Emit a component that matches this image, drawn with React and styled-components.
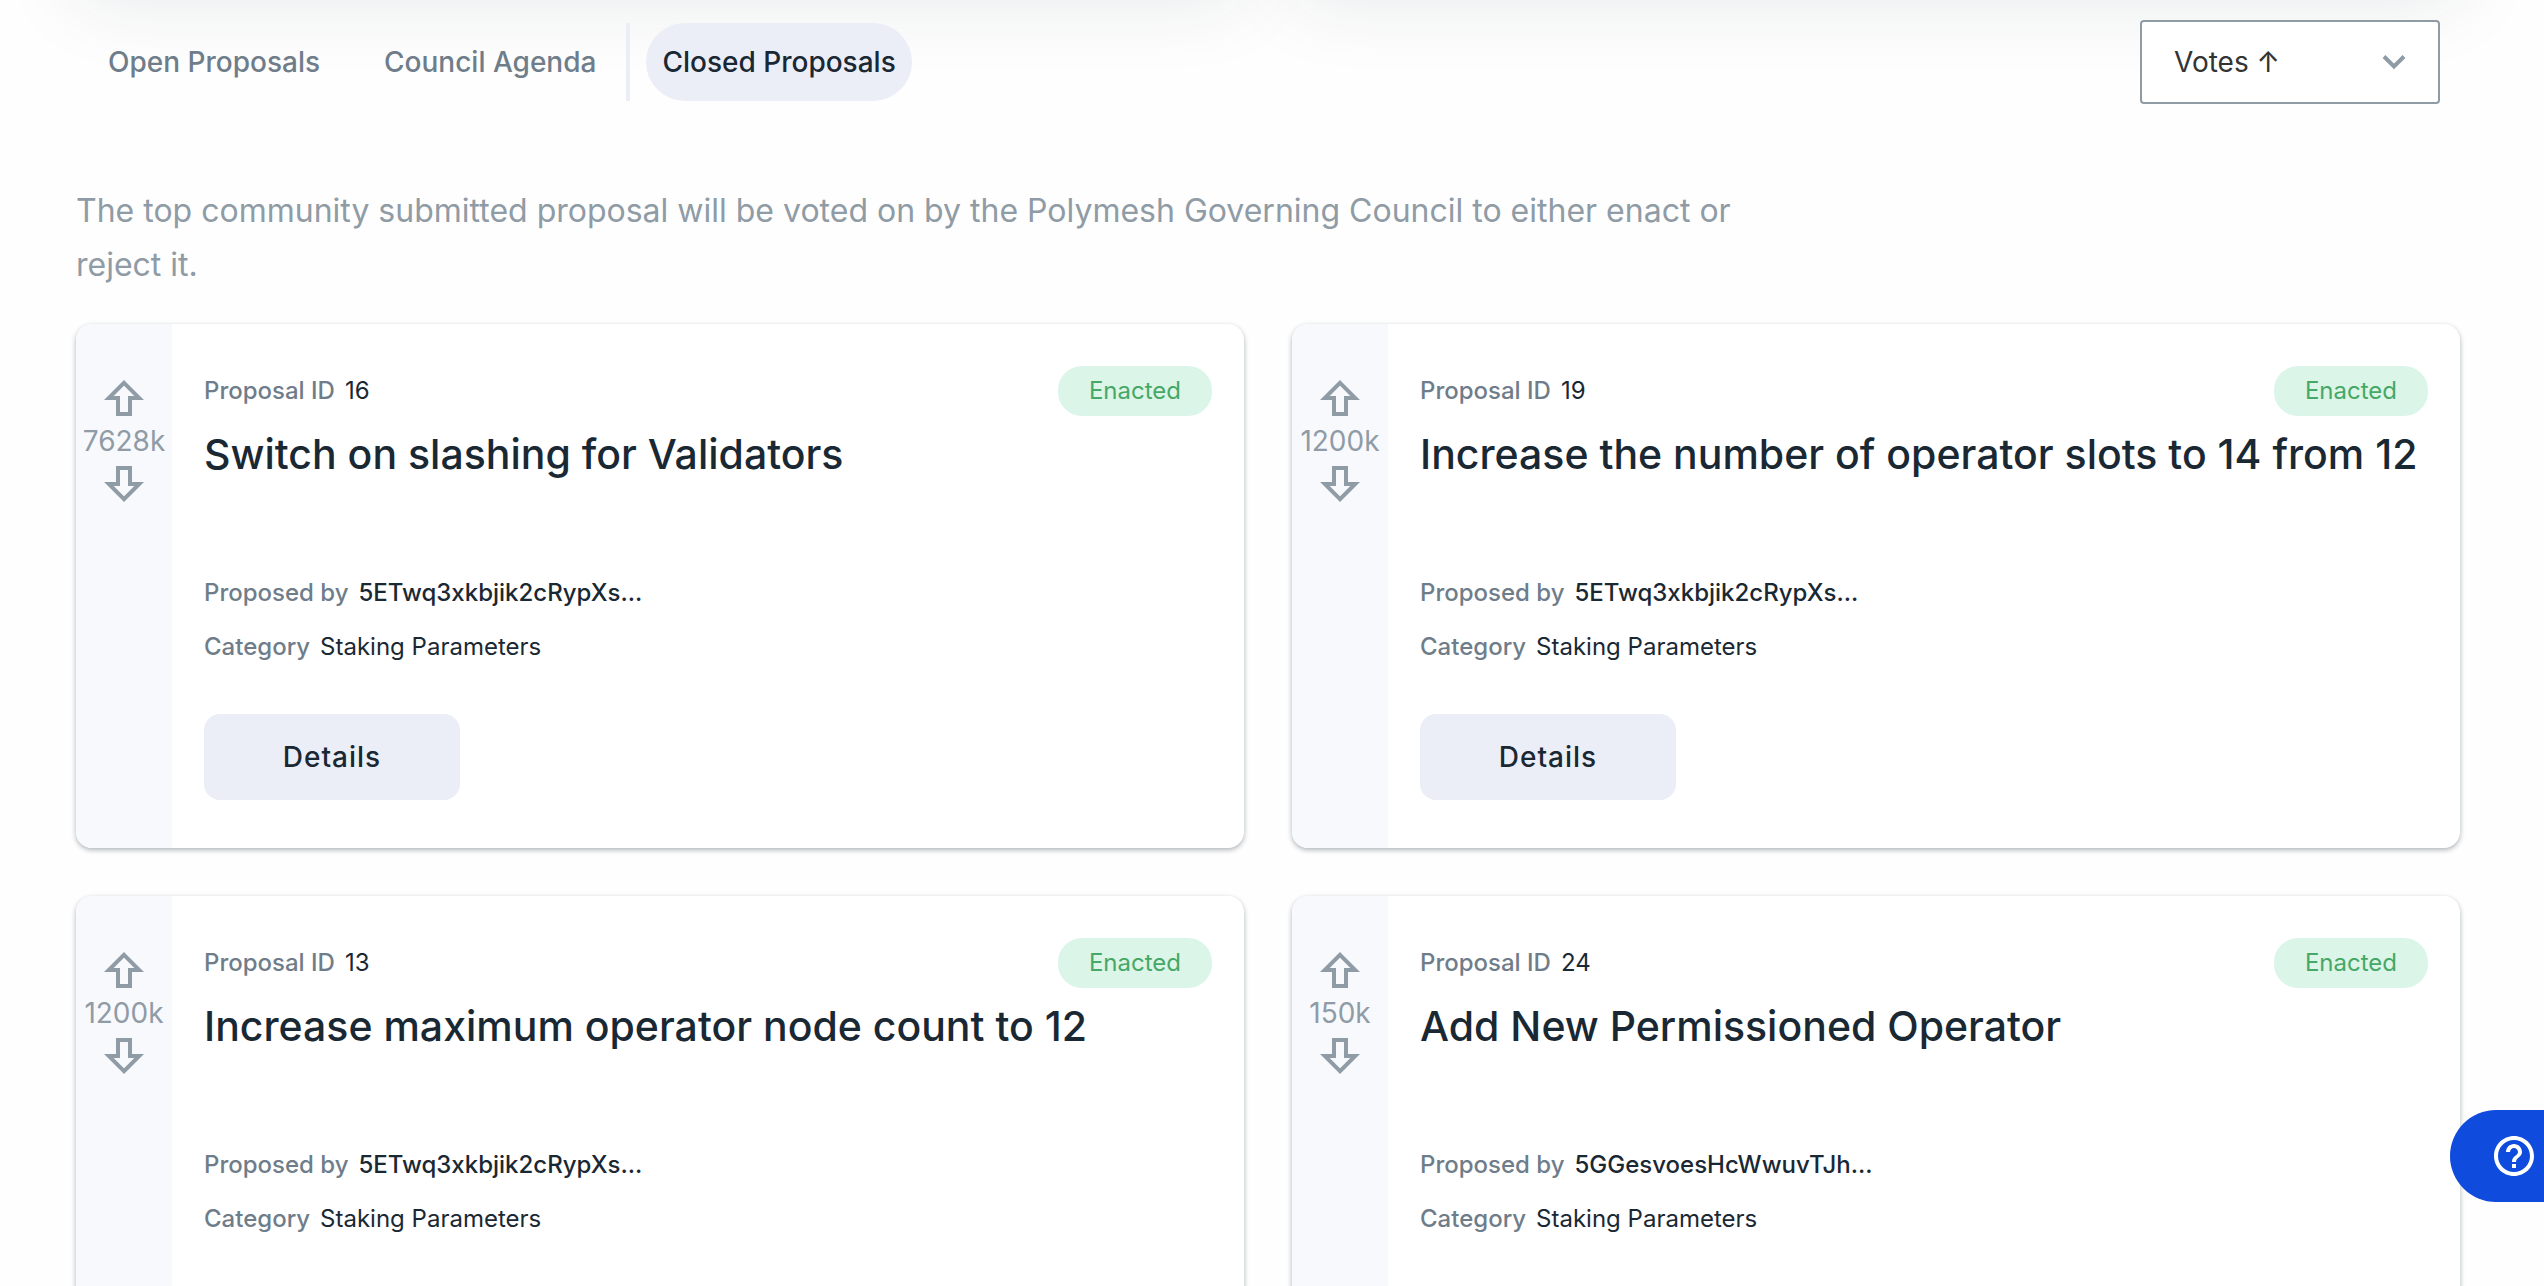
import React, { useId } from "react";
import styled, { createGlobalStyle } from "styled-components";

const ink = "#1a2834";
const slate = "#6f7d8a";
const mist = "#8f9ba5";
const haze = "#ebeef7";
const pale = "#f8f9fd";

const GlobalStyle = createGlobalStyle`
  *, *::before, *::after { box-sizing: border-box; }
  html { overflow: hidden; }
  body {
    margin: 0;
    height: 100vh;
    overflow: hidden;
    background: #fefefe;
    color: ${ink};
    font-family: Inter, "Liberation Sans", sans-serif;
    font-size: 24px;
  }
  button, select { font: inherit; color: inherit; }
`;

const Page = styled.div`
  padding: 0 84px 48px 76px;
`;

const Banners = styled.div`
  display: grid;
  grid-template-columns: repeat(2, minmax(0, 1fr));
  gap: 48px;
  margin-top: -200px;
`;

const Banner = styled.div`
  height: 200px;
  border-radius: 16px;
  box-shadow: 0 0 80px rgba(21, 41, 53, 0.1);
`;

const Toolbar = styled.header`
  display: flex;
  align-items: center;
  justify-content: space-between;
  padding: 20px 20px 0 16px;
`;

const Tabs = styled.nav`
  display: flex;
  align-items: center;
  gap: 32px;
`;

const Tab = styled.button`
  height: 78px;
  padding: 0 16px;
  border: 0;
  border-radius: 40px;
  background: ${(p) => (p.$active ? haze : "transparent")};
  color: ${(p) => (p.$active ? ink : slate)};
  font-size: 28px;
  font-weight: 500;
  cursor: pointer;
`;

const ClosedGroup = styled.div`
  display: flex;
  margin-left: -18px;
  border-left: 4px solid ${haze};
  padding-left: 16px;
`;

const SortBox = styled.label`
  display: grid;
  align-items: center;
  width: 300px;
`;

const SortSelect = styled.select`
  grid-area: 1 / 1;
  height: 84px;
  padding: 0 32px;
  border: 2px solid ${mist};
  border-radius: 4px;
  background: #fff;
  color: #333;
  font-size: 28px;
  appearance: none;
`;

const SortChevron = styled.svg`
  grid-area: 1 / 1;
  justify-self: end;
  width: 24px;
  height: 16px;
  margin-right: 34px;
  pointer-events: none;
`;

const Intro = styled.p`
  max-width: 1680px;
  margin: 80px 0 32px;
  color: ${mist};
  font-size: 32px;
  line-height: 54px;
`;

const Grid = styled.main`
  display: grid;
  grid-template-columns: repeat(2, minmax(0, 1fr));
  gap: 48px;
`;

const Card = styled.article`
  display: flex;
  overflow: hidden;
  border-radius: 16px;
  background: #fff;
  box-shadow: 0 2px 4px rgba(21, 41, 53, 0.24), 0 2px 6px rgba(21, 41, 53, 0.12);
`;

const Votes = styled.aside`
  display: flex;
  flex: none;
  flex-direction: column;
  align-items: center;
  width: 96px;
  padding-top: 56px;
  background: ${pale};
  color: ${mist};
  font-size: 28px;
  line-height: 50px;
`;

const VoteButton = styled.button`
  display: block;
  padding: 0;
  border: 0;
  background: none;
  color: ${mist};
  cursor: pointer;

  svg {
    display: block;
    width: 40px;
    height: 36px;
    transform: ${(p) => (p.$down ? "rotate(180deg)" : "none")};
  }
`;

const Body = styled.div`
  flex: 1;
  min-width: 0;
  padding: 40px 32px 48px;
`;

const Row = styled.div`
  display: flex;
  align-items: center;
  justify-content: space-between;
`;

const Fact = styled.p`
  display: flex;
  gap: 10px;
  margin: 0;
  line-height: 54px;
`;

const FactName = styled.span`
  color: ${slate};
  font-weight: 500;
`;

const FactValue = styled.span`
  color: ${ink};
  font-weight: ${(p) => (p.$strong ? 500 : 400)};
`;

const Badge = styled.span`
  padding: 0 31px;
  border-radius: 24px;
  background: #dcf5e9;
  color: #46a866;
  line-height: 50px;
`;

const Title = styled.h2`
  min-height: 112px;
  margin: 8px 0 28px;
  font-size: 41px;
  font-weight: 500;
  line-height: 56px;
`;

const DetailsButton = styled.button`
  display: block;
  width: 256px;
  height: 86px;
  margin-top: 40px;
  border: 0;
  border-radius: 16px;
  background: ${haze};
  font-size: 28px;
  font-weight: 500;
  letter-spacing: 1px;
  cursor: pointer;
`;

const HelpButton = styled.button`
  position: fixed;
  right: 0;
  bottom: 84px;
  display: flex;
  align-items: center;
  width: 94px;
  height: 92px;
  padding: 0 0 0 40px;
  border: 0;
  border-radius: 46px 0 0 46px;
  background: #0f4bdc;
  color: #fff;
  cursor: pointer;

  svg {
    flex: none;
    width: 48px;
    height: 48px;
  }
`;

function VoteArrow() {
  return (
    <svg viewBox="0 0 40 36" fill="none" stroke="currentColor" strokeWidth="4" aria-hidden="true">
      <path d="M20 2.8 35.2 18H26v16H14V18H4.8z" />
    </svg>
  );
}

const proposals = [
  { id: 16, votes: "7628k", title: "Switch on slashing for Validators", by: "5ETwq3xkbjik2cRypXs..." },
  { id: 19, votes: "1200k", title: "Increase the number of operator slots to 14 from 12", by: "5ETwq3xkbjik2cRypXs..." },
  { id: 13, votes: "1200k", title: "Increase maximum operator node count to 12", by: "5ETwq3xkbjik2cRypXs..." },
  { id: 24, votes: "150k", title: "Add New Permissioned Operator", by: "5GGesvoesHcWwuvTJh..." },
];

function Proposal({ id, votes, title, by }) {
  return (
    <Card>
      <Votes>
        <VoteButton aria-label="Vote up"><VoteArrow /></VoteButton>
        <span>{votes}</span>
        <VoteButton $down aria-label="Vote down"><VoteArrow /></VoteButton>
      </Votes>
      <Body>
        <Row>
          <Fact>
            <FactName>Proposal ID</FactName>
            <FactValue>{id}</FactValue>
          </Fact>
          <Badge>Enacted</Badge>
        </Row>
        <Title>{title}</Title>
        <Fact>
          <FactName>Proposed by</FactName>
          <FactValue $strong>{by}</FactValue>
        </Fact>
        <Fact>
          <FactName>Category</FactName>
          <FactValue>Staking Parameters</FactValue>
        </Fact>
        <DetailsButton>Details</DetailsButton>
      </Body>
    </Card>
  );
}

export default function App() {
  const sortId = useId();
  return (
    <>
      <GlobalStyle />
      <Page>
        <Banners>
          <Banner />
          <Banner />
        </Banners>
        <Toolbar>
          <Tabs>
            <Tab>Open Proposals</Tab>
            <Tab>Council Agenda</Tab>
            <ClosedGroup>
              <Tab $active>Closed Proposals</Tab>
            </ClosedGroup>
          </Tabs>
          <SortBox htmlFor={sortId}>
            <SortSelect id={sortId} aria-label="Sort by">
              <option>Votes ↑</option>
            </SortSelect>
            <SortChevron viewBox="0 0 24 16" fill="none" stroke={mist} strokeWidth="4" aria-hidden="true">
              <path d="M2 2.5 12 12.5 22 2.5" />
            </SortChevron>
          </SortBox>
        </Toolbar>
        <Intro>
          The top community submitted proposal will be voted on by the Polymesh Governing Council to either enact or
          reject it.
        </Intro>
        <Grid>
          {proposals.map((p) => (
            <Proposal key={p.id} {...p} />
          ))}
        </Grid>
      </Page>
      <HelpButton aria-label="Help">
        <svg viewBox="0 0 24 24" fill="currentColor" aria-hidden="true">
          <path d="M11 18h2v-2h-2v2zm1-16C6.480 2 2 6.480 2 12s4.480 10 10 10 10-4.480 10-10S17.520 2 12 2zm0 18c-4.410 0-8-3.590-8-8s3.590-8 8-8 8 3.590 8 8-3.590 8-8 8zm0-14c-2.210 0-4 1.790-4 4h2c0-1.100.9-2 2-2s2 .9 2 2c0 2-3 1.750-3 5h2c0-2.250 3-2.500 3-5 0-2.210-1.790-4-4-4z" />
        </svg>
      </HelpButton>
    </>
  );
}
